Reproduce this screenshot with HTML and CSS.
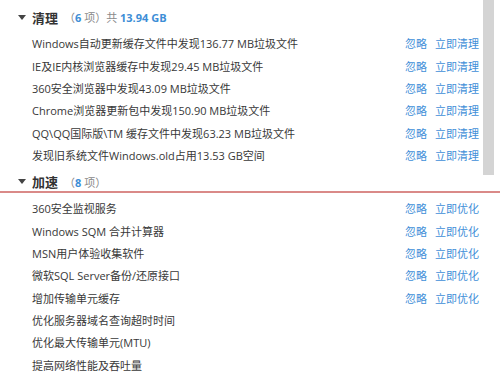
FILE: index.html
```html
<!DOCTYPE html>
<html lang="zh-CN">

<head>
    <meta charset="UTF-8">
    <meta name="viewport" content="width=device-width, initial-scale=1.0">
    <title>清理与加速</title>
    <link rel="stylesheet" href="styles.css">
</head>

<body>
    <!-- 清理 -->
    <div class="panel">
        <div class="panel-body">
            <div class="group-header first">
                <span class="arrow"></span>
                <span class="group-title">清理</span>
                <span class="group-count">（<b>6</b> 项）共 <b>13.94 GB</b></span>
            </div>
            <div class="item"><span>Windows自动更新缓存文件中发现136.77 MB垃圾文件</span><span class="actions"><a>忽略</a><a>立即清理</a></span></div>
            <div class="item"><span>IE及IE内核浏览器缓存中发现29.45 MB垃圾文件</span><span class="actions"><a>忽略</a><a>立即清理</a></span></div>
            <div class="item"><span>360安全浏览器中发现43.09 MB垃圾文件</span><span class="actions"><a>忽略</a><a>立即清理</a></span></div>
            <div class="item"><span>Chrome浏览器更新包中发现150.90 MB垃圾文件</span><span class="actions"><a>忽略</a><a>立即清理</a></span></div>
            <div class="item"><span>QQ\QQ国际版\TM 缓存文件中发现63.23 MB垃圾文件</span><span class="actions"><a>忽略</a><a>立即清理</a></span></div>
            <div class="item"><span>发现旧系统文件Windows.old占用13.53 GB空间</span><span class="actions"><a>忽略</a><a>立即清理</a></span></div>
            <div class="group-header second">
                <span class="arrow"></span>
                <span class="group-title">加速</span>
                <span class="group-count">（<b>8</b> 项）</span>
            </div>
        </div>
        <div class="scrollbar">
            <div class="thumb"></div>
        </div>
    </div>

    <!-- 加速 -->
    <div class="list">
        <div class="item"><span>360安全监视服务</span><span class="actions"><a>忽略</a><a>立即优化</a></span></div>
        <div class="item"><span>Windows SQM 合并计算器</span><span class="actions"><a>忽略</a><a>立即优化</a></span></div>
        <div class="item"><span>MSN用户体验收集软件</span><span class="actions"><a>忽略</a><a>立即优化</a></span></div>
        <div class="item"><span>微软SQL Server备份/还原接口</span><span class="actions"><a>忽略</a><a>立即优化</a></span></div>
        <div class="item"><span>增加传输单元缓存</span><span class="actions"><a>忽略</a><a>立即优化</a></span></div>
        <div class="item"><span>优化服务器域名查询超时时间</span></div>
        <div class="item"><span>优化最大传输单元(MTU)</span></div>
        <div class="item"><span>提高网络性能及吞吐量</span></div>
    </div>
</body>

</html>
```

FILE: styles.css
```css
* {
    margin: 0;
    padding: 0;
    box-sizing: border-box;
}

body {
    font-family: "Open Sans", "Noto Sans CJK SC", sans-serif;
    font-size: 11px;
    color: #383838;
    background: #fff;
    width: 500px;
    height: 383px;
    overflow: hidden;
}

.panel {
    display: flex;
    border-bottom: 2px solid #da8a88;
}

.panel-body {
    flex: 1;
    padding-right: 4px;
}

.scrollbar {
    width: 11px;
    margin-right: 6px;
}

.thumb {
    height: 175px;
    background: #d4d4d4;
}

.group-header {
    display: flex;
    align-items: center;
    height: 18px;
    padding-left: 18px;
    box-sizing: content-box;
}

.group-header.first {
    padding-top: 8px;
    padding-bottom: 6px;
}

.group-header.second {
    padding-top: 6.6px;
}

.arrow {
    width: 0;
    height: 0;
    border-left: 4px solid transparent;
    border-right: 4px solid transparent;
    border-top: 5px solid #444;
    margin-right: 6px;
}

.group-title {
    font-family: "Noto Sans CJK SC", sans-serif;
    font-size: 13px;
    font-weight: bold;
    color: #333;
    margin-right: 6px;
}

.group-count {
    color: #8a8a8a;
}

.group-count b {
    color: #3d8ed6;
}

.item {
    display: flex;
    justify-content: space-between;
    align-items: center;
    height: 22.4px;
    padding-left: 32px;
}

.list {
    padding-top: 4px;
    padding-right: 21px;
}

.actions {
    display: flex;
    gap: 8px;
}

.actions a {
    color: #3f8fd8;
    cursor: pointer;
}
```
